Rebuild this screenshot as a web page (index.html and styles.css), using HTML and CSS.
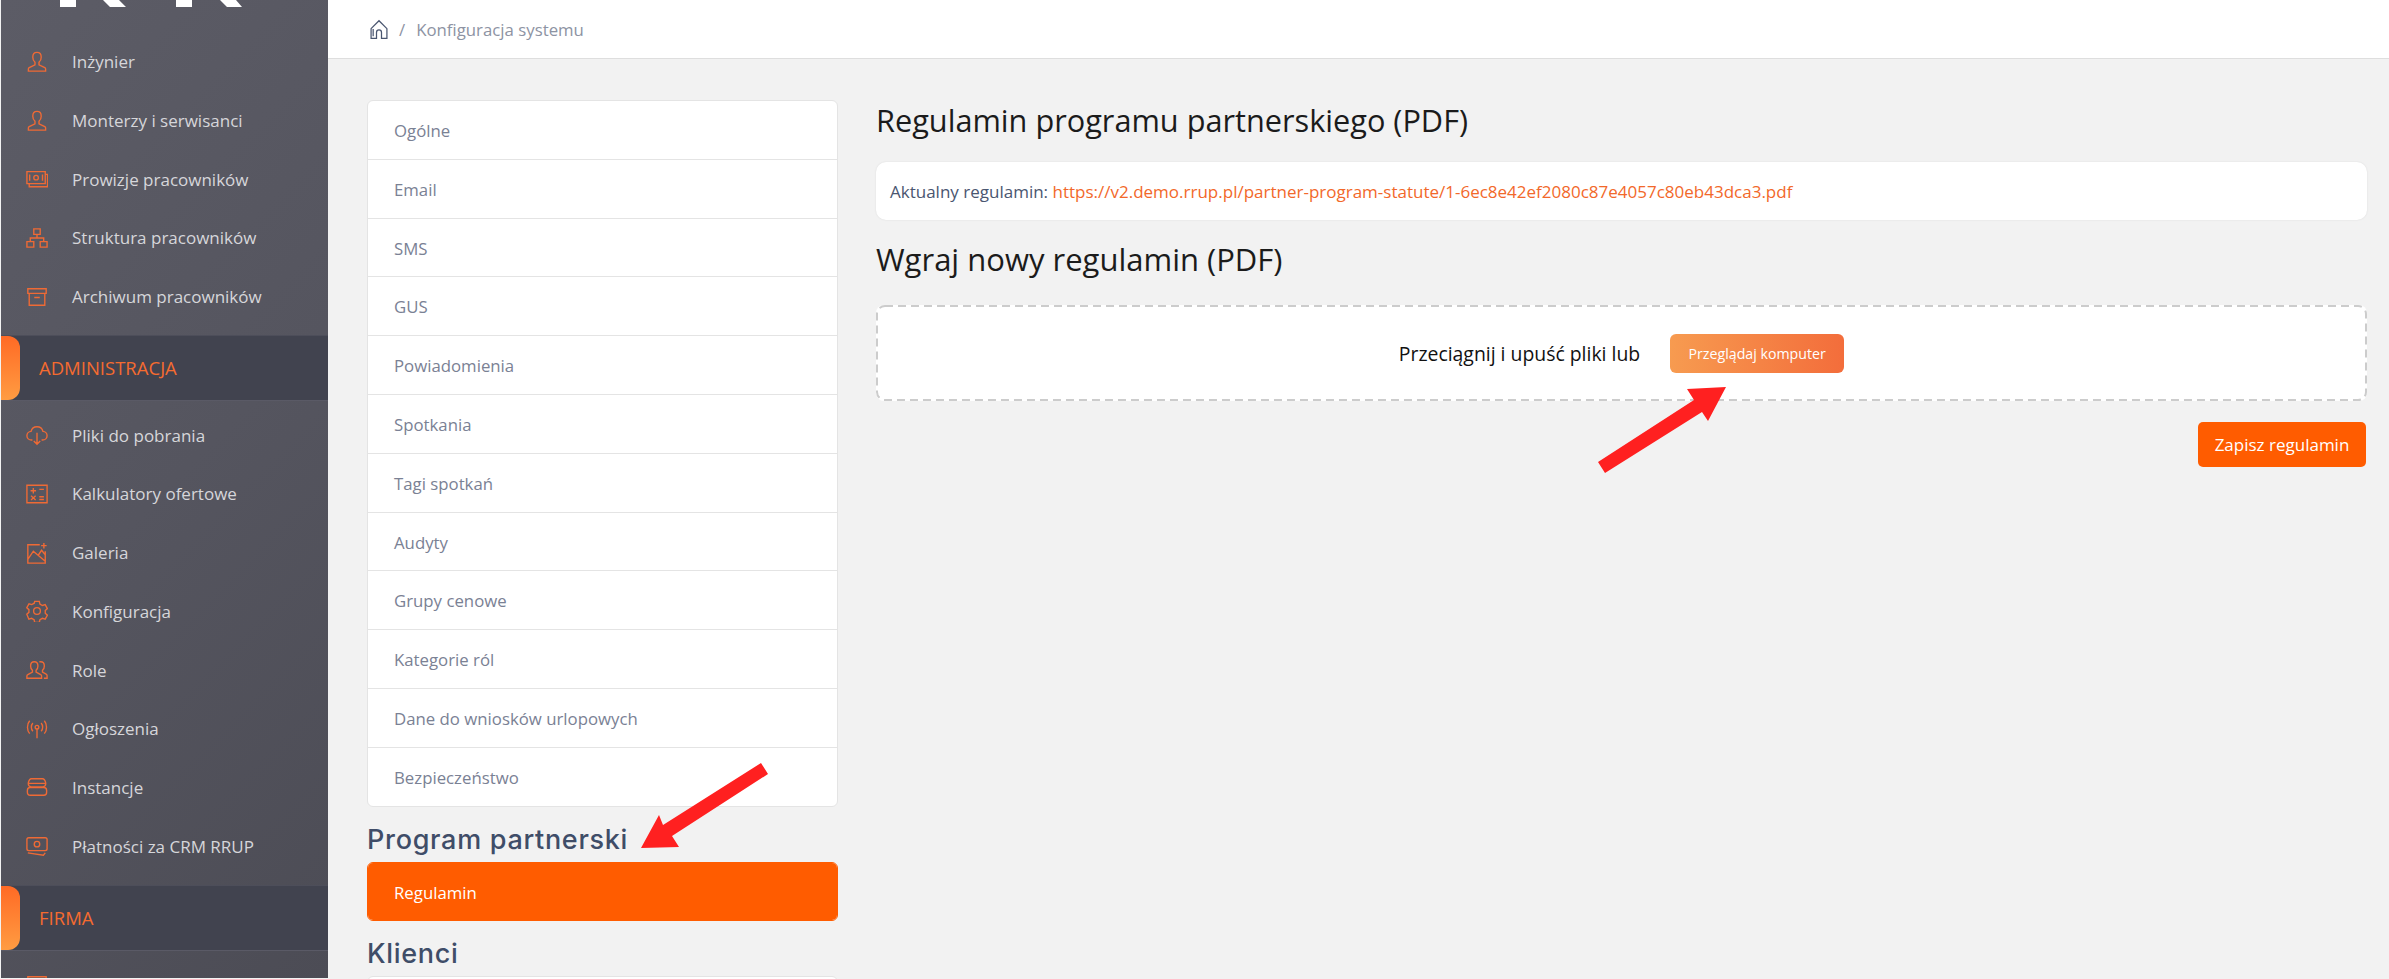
FILE: index.html
```html
<!DOCTYPE html>
<html lang="pl">
<head>
    <meta charset="UTF-8">
    <title>Konfiguracja systemu</title>
    <link rel="stylesheet" href="styles.css">
</head>
<body>
    <aside class="sidebar">
        <svg class="logo" width="327" height="32" viewBox="0 0 327 32">
            <path d="M59 0h16v7H59zM102 0h16l7 7h-16zM175 0h16v7h-16zM219 0h16l6 7h-15z" fill="#fff"/>
        </svg>
        <nav class="nav-group">
            <a class="nav-item"><svg class="icon" viewBox="0 0 24 24"><path d="M12 1.500c-3 0-4.600 2.300-4.600 5.200 0 2.400 1 4.400 2.400 5.600v2.800l-6.300 3.100c-.6.300-.9.800-.9 1.400v2.400h18.800v-2.400c0-.6-.3-1.100-.9-1.400l-6.300-3.100v-2.800c1.400-1.200 2.400-3.200 2.400-5.600 0-2.900-1.600-5.200-4.600-5.200z"/></svg>Inżynier</a>
            <a class="nav-item"><svg class="icon" viewBox="0 0 24 24"><path d="M12 1.500c-3 0-4.600 2.300-4.600 5.200 0 2.400 1 4.400 2.400 5.600v2.800l-6.300 3.100c-.6.300-.9.800-.9 1.400v2.400h18.800v-2.400c0-.6-.3-1.100-.9-1.400l-6.300-3.100v-2.800c1.400-1.200 2.400-3.200 2.400-5.600 0-2.900-1.600-5.200-4.600-5.200z"/></svg>Monterzy i serwisanci</a>
            <a class="nav-item"><svg class="icon" viewBox="0 0 24 24"><path d="M1 4h20v13H1zM3.500 17.500v3h20V7h-2.500M4 7v7M18 7v7"/><circle cx="11" cy="10.500" r="2.500"/></svg>Prowizje pracowników</a>
            <a class="nav-item"><svg class="icon" viewBox="0 0 24 24"><path d="M8.500 2h7v6h-7zM1 16h7.500v6H1zM15.500 16H23v6h-7.500zM12 8v4M4.700 16v-4h14.600v4"/></svg>Struktura pracowników</a>
            <a class="nav-item"><svg class="icon" viewBox="0 0 24 24"><path d="M2 3h20v5H2zM3.500 8v13h17V8M9 12.500h6"/></svg>Archiwum pracowników</a>
        </nav>
        <div class="nav-section">ADMINISTRACJA</div>
        <nav class="nav-group nav-group-long">
            <a class="nav-item"><svg class="icon" viewBox="0 0 24 24"><path d="M7 17.500H6c-2.800 0-5-2-5-4.700 0-2.500 2-4.600 4.500-4.700C6.200 5.200 8.800 3 12 3s5.800 2.200 6.500 5.100c2.500.1 4.500 2.200 4.500 4.700 0 2.700-2.200 4.700-5 4.700h-1M12 9.500V22M8.500 18.500L12 22l3.500-3.500"/></svg>Pliki do pobrania</a>
            <a class="nav-item"><svg class="icon" viewBox="0 0 24 24"><path d="M1 2.500h22v19H1zM5 8.500h6M8 5.500v6M14.500 7h5M14.500 15h5M14.500 18h5M5.500 14l5 4.500M10.500 14l-5 4.500"/></svg>Kalkulatory ofertowe</a>
            <a class="nav-item"><svg class="icon" viewBox="0 0 24 24"><path d="M15 3H2v20h19V10M2 19l6-9 13 11M13 15l4-6 4 5M19.500 1v6M16.500 4h6"/></svg>Galeria</a>
            <a class="nav-item"><svg class="icon" viewBox="0 0 24 24"><path d="M9.500 2h5l.7 3 2.700 1.500 3-.9 2.400 4.300-2.300 2.100v3l2.300 2.100-2.400 4.300-3-.9-2.700 1.500-.7 3h-5l-.7-3-2.700-1.500-3 .9L.9 16.100l2.300-2.100v-3L.9 8.900l2.400-4.300 3 .9 2.700-1.500z" transform="translate(0 -.5)"/><circle cx="12" cy="12" r="3.700"/></svg>Konfiguracja</a>
            <a class="nav-item"><svg class="icon" viewBox="0 0 24 24"><path d="M9 3C6.500 3 5 5 5 7.500c0 2 .9 3.800 2 4.800v2L2 17c-.6.300-1 .8-1 1.500V21h16v-2.500c0-.7-.4-1.200-1-1.500l-5-2.700v-2c1.100-1 2-2.800 2-4.800C13 5 11.500 3 9 3zM14.500 3.200c.6-.200 1.100-.2 1.500-.2 2.500 0 4 2 4 4.500 0 2-.9 3.800-2 4.800v2l3.500 1.900c.9.500 1.500 1 1.500 1.800V21h-3.500"/></svg>Role</a>
            <a class="nav-item"><svg class="icon" viewBox="0 0 24 24"><circle cx="12" cy="10" r="2"/><path d="M12 12v10M7.500 5.500c-2.200 2.400-2.200 6.600 0 9M16.500 5.500c2.200 2.400 2.200 6.600 0 9M4 3C.8 6.800.8 13.200 4 17M20 3c3.200 3.800 3.200 10.200 0 14"/></svg>Ogłoszenia</a>
            <a class="nav-item"><svg class="icon" viewBox="0 0 24 24"><path d="M6 3h12c2 0 3 2 3.500 4.500v1c0 1.500-1 3-3 3.500h-13c-2-.5-3-2-3-3.500v-1C3 5 4 3 6 3zM4.500 12.500h15c2 0 3 1.300 3 3.200v2c0 2-1.200 3.300-3 3.300h-15c-1.800 0-3-1.300-3-3.300v-2c0-1.900 1-3.200 3-3.200zM2.500 8h19M16 8h.01M19 8h.01M16 16.500h.01M19 16.500h.01"/></svg>Instancje</a>
            <a class="nav-item"><svg class="icon" viewBox="0 0 24 24"><path d="M3 3h18c1 0 2 1 2 2v10c0 1-1 2-2 2H3c-1 0-2-1-2-2V5c0-1 1-2 2-2zM2 19.500l17 2.500 2-2.500M5 10h.01M19 10h.01"/><circle cx="12" cy="10" r="3"/></svg>Płatności za CRM RRUP</a>
        </nav>
        <div class="nav-section">FIRMA</div>
        <nav class="nav-group nav-group-long">
            <a class="nav-item"><svg class="icon" viewBox="0 0 24 24"><path d="M2 3h20v18H2z"/></svg></a>
        </nav>
    </aside>

    <div class="page">
        <header class="topbar">
            <svg class="home" viewBox="0 0 24 24"><path d="M2.500 11L12 1.500 21.500 11v11.500h-6.500v-7a3 3 0 0 0-6 0v7H2.500zM5 11.500v8.500"/></svg>
            <span class="crumb-sep">/</span>
            <span class="crumb">Konfiguracja systemu</span>
        </header>

        <main class="content">
            <div class="settings-col">
                <ul class="menu">
                    <li>Ogólne</li>
                    <li>Email</li>
                    <li>SMS</li>
                    <li>GUS</li>
                    <li>Powiadomienia</li>
                    <li>Spotkania</li>
                    <li>Tagi spotkań</li>
                    <li>Audyty</li>
                    <li>Grupy cenowe</li>
                    <li>Kategorie ról</li>
                    <li>Dane do wniosków urlopowych</li>
                    <li>Bezpieczeństwo</li>
                </ul>
                <h3 class="menu-title">Program partnerski</h3>
                <ul class="menu menu-active">
                    <li class="active">Regulamin</li>
                </ul>
                <h3 class="menu-title">Klienci</h3>
                <ul class="menu">
                    <li></li>
                </ul>
            </div>

            <section class="statute">
                <h2 class="statute-title">Regulamin programu partnerskiego (PDF)</h2>
                <div class="current-file">Aktualny regulamin:&nbsp;<a class="file-link">https://v2.demo.rrup.pl/partner-program-statute/1-6ec8e42ef2080c87e4057c80eb43dca3.pdf</a></div>
                <h2 class="statute-title upload-title">Wgraj nowy regulamin (PDF)</h2>
                <div class="dropzone">
                    <svg class="dash" width="1491" height="96" viewBox="0 0 1491 96"><rect x="1" y="1" width="1489" height="94" rx="8"/></svg>
                    <span class="drop-text">Przeciągnij i upuść pliki lub</span>
                    <button class="browse-btn" type="button">Przeglądaj komputer</button>
                </div>
                <div class="actions">
                    <button class="save-btn" type="button">Zapisz regulamin</button>
                </div>
            </section>
        </main>
    </div>

    <!-- red arrows drawn over the screenshot -->
    <svg class="arrows" width="2389" height="979" viewBox="0 0 2389 979">
        <path d="M641 848L659 815 663 825 761 763 768 774 672 836 679 847z"/>
        <path d="M1726 387L1708 421 1702 412 1605 473 1598 462 1694 400 1687 389z"/>
    </svg>
</body>
</html>
```

FILE: styles.css
```css
html, body {
    height: 100%;
}
body {
    margin: 0;
    width: 2389px;
    height: 979px;
    overflow: hidden;
    display: flex;
    background-color: #f2f2f2;
    font-family: "Open Sans", "Noto Sans", sans-serif;
}
.sidebar {
    width: 327px;
    height: 978px;
    margin-left: 1px;
    flex-shrink: 0;
    overflow: hidden;
    background: linear-gradient(135deg, #5c5c66 0%, #55555f 50%, #4c4c55 100%);
}
.logo {
    display: block;
}
.nav-group {
    padding-bottom: 10px;
}
.nav-group-long {
    padding-top: 4px;
}
.nav-item {
    display: flex;
    align-items: center;
    height: 58.7px;
    padding-left: 25px;
    gap: 24px;
    color: #d6d6da;
    font-size: 17px;
    line-height: 1;
    padding-top: 1px;
    box-sizing: border-box;
}
.icon {
    width: 22px;
    height: 22px;
    flex-shrink: 0;
    fill: none;
    stroke: #ef6a35;
    stroke-width: 1.5;
}
.nav-section {
    position: relative;
    height: 64px;
    line-height: 64px;
    padding-left: 38px;
    background-color: #41434f;
    border-top: 1px solid #4d4e5a;
    border-bottom: 1px solid #5a5a66;
    color: #f56b2f;
    font-size: 18.500px;
    font-weight: 500;
}
.nav-section::before {
    content: "";
    position: absolute;
    left: -1px;
    top: 0;
    width: 20px;
    height: 64px;
    border-radius: 0 12px 12px 0;
    background: linear-gradient(180deg, #ff6a25, #ff9c42);
}
.page {
    flex: 1;
    min-width: 0;
    height: 979px;
    overflow: hidden;
}
.topbar {
    display: flex;
    align-items: center;
    height: 58px;
    padding-left: 41px;
    background: white;
    border-bottom: 1px solid #dedede;
    color: #8d93a3;
    font-size: 16.800px;
}
.home {
    width: 20px;
    height: 21px;
    fill: none;
    stroke: #4a5670;
    stroke-width: 1.500;
}
.crumb-sep {
    margin: 0 11px 0 10px;
}
.content {
    display: grid;
    grid-template-columns: 471px 1fr;
    gap: 38px;
    padding: 41px 22px 0 39px;
}
.menu {
    list-style: none;
    margin: 0;
    padding: 0;
    background: white;
    border: 1px solid #e4e4e4;
    border-radius: 6px;
    overflow: hidden;
}
.menu-active {
    border-color: #ff5c00;
}
.menu li {
    height: 57.8px;
    line-height: 59px;
    padding-left: 26px;
    border-top: 1px solid #e4e4e4;
    color: #7a8194;
    font-size: 16.800px;
}
.menu li:first-child {
    border-top: none;
}
.menu li.active {
    background-color: #ff5c00;
    color: white;
}
.menu-title {
    margin: 0;
    padding: 15px 0 3px;
    height: 37px;
    line-height: 36px;
    color: #3f4d68;
    font-family: Inter, sans-serif;
    font-size: 27px;
    font-weight: 500;
    letter-spacing: 0.7px;
}
.statute-title {
    margin: 0;
    height: 42px;
    line-height: 40px;
    color: #1b1b1b;
    font-size: 30.700px;
    font-weight: 500;
}
.current-file {
    display: flex;
    align-items: center;
    height: 58px;
    margin-top: 20px;
    padding-left: 14px;
    background: white;
    border-radius: 10px;
    box-shadow: 0 0 2px rgba(0, 0, 0, 0.1);
    color: #4a5670;
    font-size: 17px;
}
.file-link {
    color: #f2682a;
}
.upload-title {
    margin-top: 19px;
    font-size: 31px;
}
.dropzone {
    position: relative;
    display: flex;
    align-items: center;
    justify-content: center;
    height: 96px;
    margin-top: 24px;
    background: white;
    border-radius: 8px;
}
.dash {
    position: absolute;
    left: 0;
    top: 0;
    fill: none;
    stroke: #cccccc;
    stroke-width: 2;
    stroke-dasharray: 8 5;
}
.drop-text {
    color: #111;
    font-size: 19.400px;
    margin-right: 30px;
}
.browse-btn {
    height: 39px;
    width: 174px;
    padding: 0;
    border: none;
    border-radius: 6px;
    background: linear-gradient(90deg, #f79b50, #f36d3b);
    color: white;
    font-family: inherit;
    font-size: 14.200px;
}
.actions {
    display: flex;
    justify-content: flex-end;
    margin-top: 21px;
    padding-right: 1px;
}
.save-btn {
    width: 168px;
    height: 45px;
    padding: 0;
    border: none;
    border-radius: 5px;
    background-color: #ff5c00;
    color: white;
    font-family: inherit;
    font-size: 17px;
}
.arrows {
    position: absolute;
    left: 0;
    top: 0;
    fill: #ff2020;
}
```
